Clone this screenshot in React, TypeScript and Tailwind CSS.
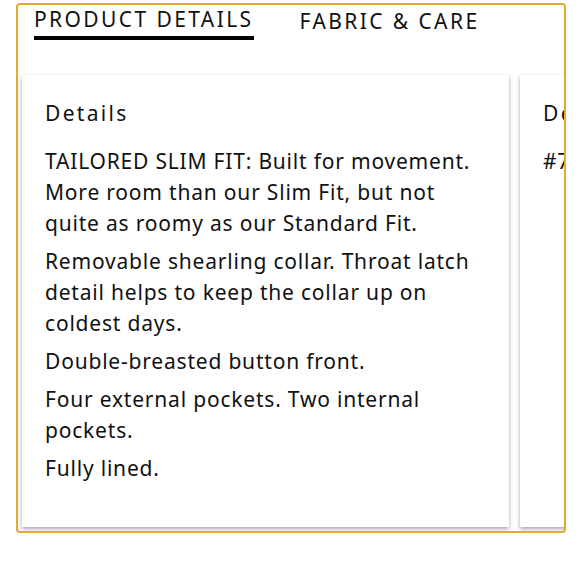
const details = [
  "TAILORED SLIM FIT: Built for movement. More room than our Slim Fit, but not quite as roomy as our Standard Fit.",
  "Removable shearling collar. Throat latch detail helps to keep the collar up on coldest days.",
  "Double-breasted button front.",
  "Four external pockets. Two internal pockets.",
  "Fully lined.",
];

function Card({ title, lines }: { title: string; lines: string[] }) {
  return (
    <div className="flex h-[452px] w-[487px] shrink-0 flex-col bg-white px-[23px] pt-[24px] shadow-[0_2px_4px_rgba(0,0,0,0.35)]">
      <h3 className="text-[21px] leading-[28px] tracking-[2.3px]">{title}</h3>
      <div className="mt-[19px] flex flex-col gap-[7px]">
        {lines.map((line) => (
          <p key={line} className="text-[21px] leading-[31px] tracking-[0.8px]">
            {line}
          </p>
        ))}
      </div>
    </div>
  );
}

export default function App() {
  return (
    <div className="min-h-[580px] w-[580px] bg-white pt-[3px] text-[#111] [font-family:'Noto_Sans',sans-serif]">
      <div className="ml-[16px] h-[530px] w-[550px] overflow-hidden rounded-[4px] border-2 border-[#e6a935] bg-white">
        <div className="flex gap-[46px] pl-[16px]">
          <button className="border-b-[4px] border-black pb-[3px] text-[21px] leading-[28px] tracking-[2.4px] uppercase">
            Product Details
          </button>
          <button className="pb-[3px] text-[21px] leading-[28px] tracking-[2.4px] uppercase">
            Fabric &amp; Care
          </button>
        </div>
        <div className="mt-[35px] flex gap-[11px] pl-[4px]">
          <Card title="Details" lines={details} />
          <Card title="Details" lines={["#7342019"]} />
        </div>
      </div>
    </div>
  );
}
